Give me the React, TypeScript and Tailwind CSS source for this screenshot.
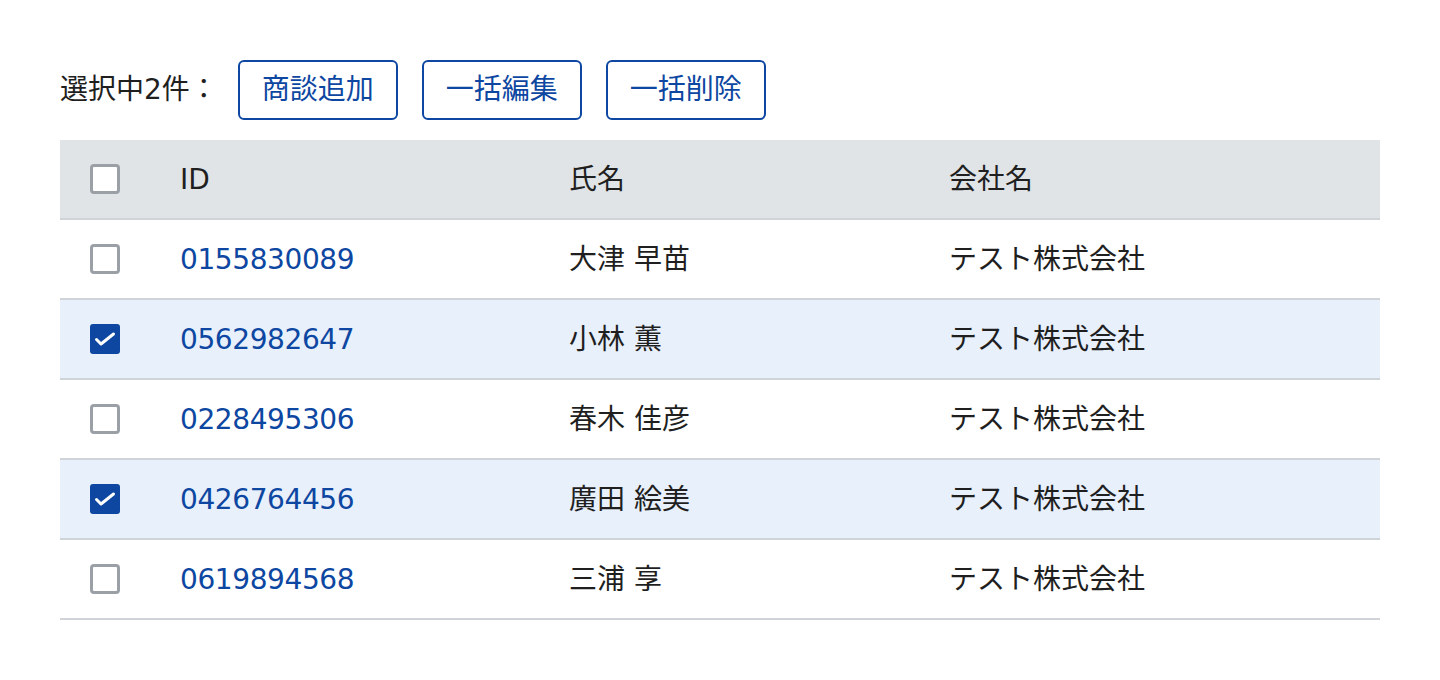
import React from "react";

const rows = [
  { id: "0155830089", name: "大津 早苗", company: "テスト株式会社", checked: false },
  { id: "0562982647", name: "小林 薫", company: "テスト株式会社", checked: true },
  { id: "0228495306", name: "春木 佳彦", company: "テスト株式会社", checked: false },
  { id: "0426764456", name: "廣田 絵美", company: "テスト株式会社", checked: true },
  { id: "0619894568", name: "三浦 享", company: "テスト株式会社", checked: false },
];

function Checkbox({ checked }: { checked: boolean }) {
  if (checked) {
    return (
      <div className="w-[30px] h-[30px] rounded-[3px] bg-[#0d47a1]">
        <svg width="30" height="30" viewBox="0 0 30 30" fill="none">
          <path d="M6.5 15.5 L11 20 L23.5 10" stroke="white" strokeWidth="3" strokeLinecap="round" strokeLinejoin="round" />
        </svg>
      </div>
    );
  }
  return <div className="w-[30px] h-[30px] rounded-[4px] border-[3px] border-[#9aa0a6] bg-white" />;
}

export default function App() {
  return (
    <div
      className="w-[1440px] h-[680px] bg-white px-[60px] pt-[60px] text-[#1f1f1f] text-[28px]"
      style={{ fontFamily: '"DejaVu Sans", "Noto Sans CJK JP", sans-serif' }}
    >
      <div className="flex items-center h-[60px]">
        <span className="mr-[20px]">選択中2件：</span>
        <div className="flex gap-[24px]">
          {["商談追加", "一括編集", "一括削除"].map((t) => (
            <button
              key={t}
              className="w-[160px] h-[60px] border-2 border-[#0d47a1] rounded-[6px] text-[#0d47a1] flex items-center justify-center bg-white"
            >
              {t}
            </button>
          ))}
        </div>
      </div>
      <div className="mt-[20px] w-[1320px]">
        <div className="grid grid-cols-[90px_390px_380px_1fr] h-[80px] items-center bg-[#e1e4e7] border-b-2 border-[#d0d4d9]">
          <div className="pl-[30px]">
            <Checkbox checked={false} />
          </div>
          <div className="pl-[30px] pt-[2px]">ID</div>
          <div className="pl-[29px] pt-[2px]">氏名</div>
          <div className="pl-[29px] pt-[2px]">会社名</div>
        </div>
        {rows.map((r) => (
          <div
            key={r.id}
            className={`grid grid-cols-[90px_390px_380px_1fr] h-[80px] items-center border-b-2 border-[#d0d4d9] ${
              r.checked ? "bg-[#e8f0fb]" : "bg-white"
            }`}
          >
            <div className="pl-[30px]">
              <Checkbox checked={r.checked} />
            </div>
            <div className="pl-[30px] pt-[2px] text-[#0d47a1] tracking-[-0.4px]">{r.id}</div>
            <div className="pl-[29px] pt-[2px]">{r.name}</div>
            <div className="pl-[29px] pt-[2px]">{r.company}</div>
          </div>
        ))}
      </div>
    </div>
  );
}
